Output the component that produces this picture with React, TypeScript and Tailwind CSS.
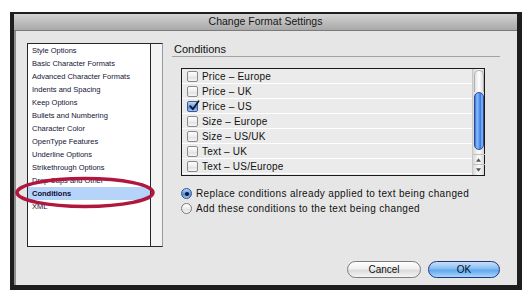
import React from "react";

const leftItems = [
  "Style Options",
  "Basic Character Formats",
  "Advanced Character Formats",
  "Indents and Spacing",
  "Keep Options",
  "Bullets and Numbering",
  "Character Color",
  "OpenType Features",
  "Underline Options",
  "Strikethrough Options",
  "Drop Caps and Other",
  "Conditions",
  "XML",
];

const conds = [
  { t: "Price – Europe", c: false },
  { t: "Price – UK", c: false },
  { t: "Price – US", c: true },
  { t: "Size – Europe", c: false },
  { t: "Size – US/UK", c: false },
  { t: "Text – UK", c: false },
  { t: "Text – US/Europe", c: false },
];

function Checkbox({ checked }: { checked: boolean }) {
  if (checked) {
    return (
      <div className="relative w-[11px] h-[11px] rounded-[2px] border border-[#3a5a9a] bg-[linear-gradient(to_bottom,#bcd8f8,#6aa2e6_50%,#4d8be0_55%,#9cc8f4)]">
        <svg viewBox="0 0 12 12" className="absolute left-[0px] top-[-2px] w-[12px] h-[12px]">
          <path d="M2.2 6.2 L4.8 9.2 L10.5 1.2" fill="none" stroke="#101828" strokeWidth="1.8" strokeLinecap="round" strokeLinejoin="round" />
        </svg>
      </div>
    );
  }
  return (
    <div className="w-[11px] h-[11px] rounded-[2px] border border-[#8a8a8a] bg-[linear-gradient(to_bottom,#ffffff,#ececec_50%,#e0e0e0_55%,#f6f6f6)]" />
  );
}

function Radio({ on }: { on: boolean }) {
  if (on) {
    return (
      <div className="w-[11px] h-[11px] rounded-full border border-[#34508e] bg-[linear-gradient(to_bottom,#b8d6f8,#5e9ae4_50%,#4a86dc_55%,#a0ccf6)] flex items-center justify-center">
        <div className="w-[4px] h-[4px] rounded-full bg-[#0e1628]" />
      </div>
    );
  }
  return (
    <div className="w-[11px] h-[11px] rounded-full border border-[#7a7a7a] bg-[linear-gradient(to_bottom,#ffffff,#ececec_50%,#dedede_55%,#f8f8f8)]" />
  );
}

export default function App() {
  return (
    <div
      className="relative w-[532px] h-[301px] bg-white pt-[12px] pl-[10px]"
      style={{ fontFamily: '"Liberation Sans", Arial, sans-serif' }}
    >
      <div className="w-[512px] h-[278px] bg-[#1e1e1e] pt-[2px] pl-[4px] pr-[5px] pb-[5px] flex flex-col">
        {/* Title bar */}
        <div className="h-[17px] shrink-0 flex items-center justify-center bg-[linear-gradient(to_bottom,#d4d4d4,#bdbdbd_50%,#a9a9a9)] border-b border-[#7a7a7a] text-[10.5px] text-[#151515]">
          Change Format Settings
        </div>
        {/* Body */}
        <div className="flex-1 flex bg-[#e6e6e6] border-l-2 border-[#8e8e8e]">
          {/* Left list */}
          <div className="ml-[11px] mt-[12px] w-[136px] h-[204px] flex border border-[#262626] border-r-[#9a9a9a] shrink-0">
            <div className="w-[122px] bg-white flex flex-col text-[7.5px] text-[#141436]">
              {leftItems.map((it) => (
                <div
                  key={it}
                  className={
                    "h-[13px] leading-[13px] pl-[4px] whitespace-nowrap " +
                    (it === "Conditions" ? "bg-[#b6d4fa] font-bold text-[#0a0a30]" : "")
                  }
                >
                  {it}
                </div>
              ))}
            </div>
            <div className="flex-1 border-l border-[#262626] bg-[#f3f3f3]" />
          </div>

          {/* Right panel */}
          <div className="ml-[9px] w-[328px] flex flex-col pb-[7px]">
            <div className="mt-[12px] h-[14px] border-b border-[#a2a2a2] text-[11px] leading-[13px] pl-[2px] text-[#101010]">
              Conditions
            </div>
            {/* Conditions list */}
            <div className="ml-[9px] mt-[11px] w-[304px] h-[108px] border border-[#1a1a1a] flex">
              <div className="flex-1 flex flex-col bg-[#ebebeb]">
                {conds.map((c) => (
                  <div key={c.t} className="h-[15px] flex items-center border-b border-white pl-[5px]">
                    <Checkbox checked={c.c} />
                    <span className="ml-[4px] text-[10px] text-[#111] tracking-[0.2px]">{c.t}</span>
                  </div>
                ))}
              </div>
              {/* Scrollbar */}
              <div className="w-[12px] flex flex-col items-center bg-[linear-gradient(to_right,#d8d8d8,#f4f4f4_40%,#f8f8f8_60%,#d6d6d6)] border-l border-[#c8c8c8]">
                <div className="mt-[1px] w-[10px] h-[22px] rounded-t-full border border-[#b0b0b0] border-b-0 bg-[linear-gradient(to_right,#e2e2e2,#ffffff_50%,#dcdcdc)]" />
                <div className="w-[10px] h-[58px] rounded-full border border-[#2c4c9c] bg-[linear-gradient(to_right,#3a68c8,#8cc0fc_25%,#5a9af0_50%,#3b7ae0_70%,#9ccaff_90%,#3a68c8)]" />
                <div className="flex-1" />
                <div className="w-[12px] h-[10px] flex items-center justify-center border-t border-[#c0c0c0]">
                  <svg viewBox="0 0 6 4" className="w-[5px] h-[4px]">
                    <path d="M3 0 L6 4 L0 4 Z" fill="#555" />
                  </svg>
                </div>
                <div className="w-[12px] h-[11px] flex items-center justify-center border-t border-[#c0c0c0]">
                  <svg viewBox="0 0 6 4" className="w-[5px] h-[4px]">
                    <path d="M0 0 L6 0 L3 4 Z" fill="#555" />
                  </svg>
                </div>
              </div>
            </div>
            {/* Radios */}
            <div className="ml-[9px] mt-[10px] flex flex-col text-[10px] text-[#111] tracking-[0.35px]">
              <div className="h-[15px] flex items-center">
                <Radio on={true} />
                <span className="ml-[4px]">Replace conditions already applied to text being changed</span>
              </div>
              <div className="h-[15px] flex items-center">
                <Radio on={false} />
                <span className="ml-[4px]">Add these conditions to the text being changed</span>
              </div>
            </div>
            <div className="flex-1" />
            {/* Buttons */}
            <div className="flex justify-end gap-[7px]">
              <div className="w-[74px] h-[17px] rounded-full border border-[#7c7c7c] bg-[linear-gradient(to_bottom,#ffffff,#f0f0f0_45%,#dcdcdc_55%,#f4f4f4)] flex items-center justify-center text-[10px] text-[#111]">
                Cancel
              </div>
              <div className="w-[72px] h-[17px] rounded-full border border-[#23357e] bg-[linear-gradient(to_bottom,#c6e0fa,#86bdf2_45%,#5ea8ee_55%,#a8d6ff)] flex items-center justify-center text-[10px] text-[#0c0c20]">
                OK
              </div>
            </div>
          </div>
        </div>
      </div>

      {/* Red annotation ellipse */}
      <svg
        className="absolute left-[14px] top-[175px] pointer-events-none"
        width="144"
        height="36"
        viewBox="0 0 144 36"
      >
        <ellipse cx="71" cy="17.5" rx="68" ry="14" fill="none" stroke="#b0163e" strokeWidth="3.5" />
      </svg>
    </div>
  );
}
